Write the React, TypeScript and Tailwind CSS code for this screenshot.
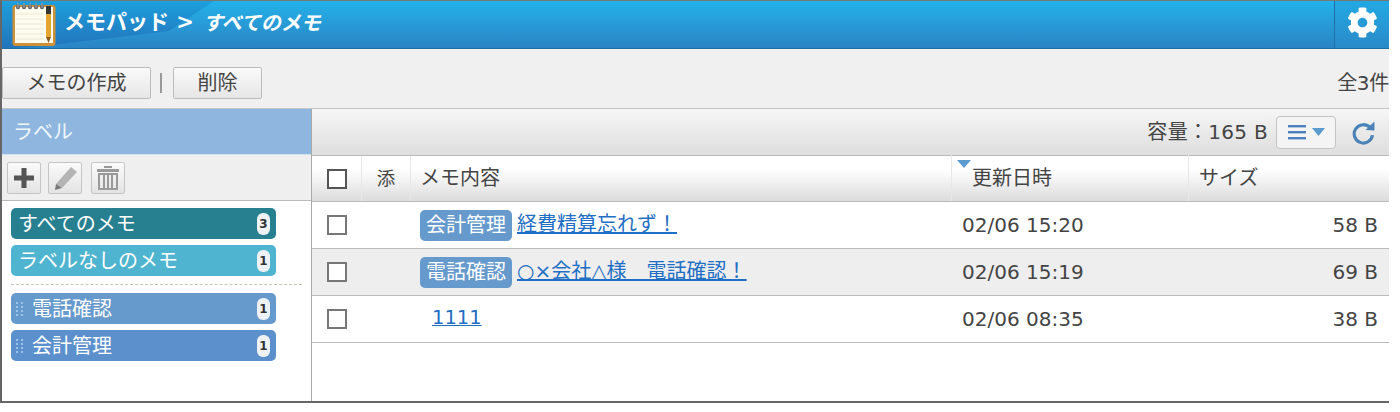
import React from "react";
import { FaCog } from "react-icons/fa";

const font = "font-['DejaVu_Sans','Noto_Sans_CJK_JP',sans-serif]";

function Notepad() {
  return (
    <svg width="44" height="43" viewBox="0 0 44 43">
      <rect x="0.5" y="2" width="43" height="41" rx="3" fill="#cf9138" />
      <rect x="3" y="4" width="38" height="36" fill="#fdfbee" />
      {[11, 16, 21, 26, 31, 36].map((y) => (
        <line key={y} x1="4" x2="32" y1={y} y2={y} stroke="#ece8d4" strokeWidth="1" />
      ))}
      {[6, 12, 18, 24, 30].map((x) => (
        <g key={x}>
          <circle cx={x} cy="4" r="2.2" fill="#666" />
          <rect x={x - 0.7} y="0" width="1.4" height="5" fill="#999" />
        </g>
      ))}
      <rect x="34" y="3" width="5" height="8" fill="#333" />
      <rect x="34" y="11" width="5" height="23" fill="#e3a52d" />
      <path d="M34 34 L39 34 L36.5 40 Z" fill="#8a5a20" />
    </svg>
  );
}

function Refresh() {
  return (
    <svg width="25" height="25" viewBox="0 0 24 24" fill="none">
      <path d="M18.5 7.5A8.8 8.8 0 1 0 20.6 14.5" stroke="#4a82b8" strokeWidth="3" />
      <path d="M14 9.5 L22.5 10 L22.5 1.5 Z" fill="#4a82b8" />
    </svg>
  );
}

function IconButton({ children, className = "" }: { children: React.ReactNode; className?: string }) {
  return (
    <div className={`w-[34px] h-[32px] flex items-center justify-center rounded-[2px] border border-[#c4c4c4] bg-gradient-to-b from-[#fafafa] to-[#e4e4e4] ${className}`}>
      {children}
    </div>
  );
}

function Count({ n }: { n: number }) {
  return (
    <span className="w-[13px] h-[22px] rounded-[6px] bg-[#eef2f5] text-[#333] text-[12px] font-bold flex items-center justify-center">
      {n}
    </span>
  );
}

function Grip() {
  return (
    <span className="w-[8px] h-[24px] mr-[8px] grid grid-cols-2 gap-x-[2px] gap-y-[2px] content-center">
      {[0, 1, 2, 3, 4, 5, 6, 7].map((i) => (
        <span key={i} className="w-[2px] h-[2px] bg-[#9cc3ea]" />
      ))}
    </span>
  );
}

function Label({ text, bg, n, grip }: { text: string; bg: string; n: number; grip?: boolean }) {
  return (
    <div className={`w-[265px] h-[31px] rounded-[5px] flex items-center pl-[5px] pr-[6px] text-white text-[20px] ${bg}`}>
      {grip ? <Grip /> : <span className="w-[2px]" />}
      <span className="flex-1 leading-none">{text}</span>
      <Count n={n} />
    </div>
  );
}

function Check({ big }: { big?: boolean }) {
  return <span className={`block w-[20px] h-[20px] border-2 ${big ? "border-[#555]" : "border-[#777]"} bg-white`} />;
}

function Tag({ text }: { text: string }) {
  return (
    <span className="w-[92px] h-[31px] shrink-0 rounded-[5px] bg-[#6699cc] text-white text-[20px] leading-none flex items-center justify-center">
      {text}
    </span>
  );
}

function Row({
  tag,
  title,
  date,
  size,
  alt,
}: {
  tag?: string;
  title: string;
  date: string;
  size: string;
  alt?: boolean;
}) {
  return (
    <div className={`h-[47px] grid grid-cols-[50px_49px_541px_237px_1fr] items-center text-[#444] text-[20px] leading-none border-b border-[#bbb] ${alt ? "bg-[#eeeeee]" : "bg-white"}`}>
      <div className="flex justify-center">
        <Check />
      </div>
      <div />
      <div className="flex items-center pl-[9px] gap-[5px]">
        {tag ? <Tag text={tag} /> : <span className="w-[7px]" />}
        <a className={`text-[#1f6fc4] underline leading-none -mt-[3px] ${tag ? "" : "text-[19.5px]"}`}>{title}</a>
      </div>
      <div className="pl-[10px]">{date}</div>
      <div className="text-right pr-[11px]">{size}</div>
    </div>
  );
}

export default function App() {
  return (
    <div className={`w-[1400px] h-[412px] bg-white overflow-hidden pr-[11px] ${font}`}>
      <div className="h-[403px] bg-[#f0f0f0] border-l-2 border-[#666] border-t border-t-[#777] border-b-2 border-b-[#666] flex flex-col">
        <header className="h-[48px] shrink-0 relative flex items-center bg-gradient-to-b from-[#22b2ea] to-[#2a84c4] border-b border-[#1d6fa8]">
          <div
            className="absolute inset-0 bg-gradient-to-b from-[#1d9fdc] to-[#2274bb]"
            style={{ clipPath: "polygon(0 0, 212px 0, 167px 30px, 50px 44px, 0 48px)" }}
          />
          <div className="relative ml-[10px]">
            <Notepad />
          </div>
          <div className="relative ml-[8px] flex items-center text-white font-bold -mt-[4px]">
            <span className="text-[21px]">メモパッド &gt;</span>
            <span className="ml-[9px] italic text-[20px]">すべてのメモ</span>
          </div>
          <div className="relative ml-auto w-[55px] h-[47px] flex items-center justify-center border-l border-[#1d6fa8] bg-gradient-to-b from-[#22a9e4] to-[#2a8ac8]">
            <FaCog className="text-white w-[31px] h-[31px] -mt-[4px]" />
          </div>
        </header>

        <div className="h-[59px] shrink-0 flex items-center justify-between pt-[8px] text-[#444] text-[20px]">
          <div className="flex items-center">
            <button className="w-[149px] h-[32px] rounded-[2px] border border-[#bbb] bg-gradient-to-b from-[#fafafa] to-[#e6e6e6] text-[#444] leading-none">
              メモの作成
            </button>
            <span className="ml-[9px] mr-[11px] w-[2px] h-[20px] bg-[#999]" />
            <button className="w-[89px] h-[32px] rounded-[2px] border border-[#bbb] bg-gradient-to-b from-[#fafafa] to-[#e6e6e6] text-[#444] leading-none">
              削除
            </button>
          </div>
          <span className="tracking-[-0.3px]">全3件</span>
        </div>

        <div className="flex-1 flex border-t border-[#c4c4c4] bg-white min-h-0">
          <aside className="w-[310px] shrink-0 border-r border-[#aaa] flex flex-col">
            <div className="h-[46px] bg-[#8eb6de] text-[#eef6fb] text-[20px] flex items-center pl-[11px] border-b border-[#cfe0ef]">
              ラベル
            </div>
            <div className="h-[46px] bg-[#efefef] border-b border-[#bbb] flex items-center gap-[7px] pl-[5px]">
              <IconButton>
                <svg width="22" height="22" viewBox="0 0 22 22">
                  <path d="M8.5 1h5v7.5H21v5h-7.5V21h-5v-7.5H1v-5h7.5z" fill="#555" />
                </svg>
              </IconButton>
              <IconButton>
                <svg width="28" height="28" viewBox="0 0 28 28">
                  <path d="M20 3 L26 8 L11 24 L5 20 Z" fill="#b4b4b4" />
                  <path d="M5 20 L11 24 L4 26 Z" fill="#777" />
                </svg>
              </IconButton>
              <IconButton className="ml-[2px]">
                <svg width="26" height="28" viewBox="0 0 26 28" fill="#9a9a9a">
                  <rect x="9" y="2" width="8" height="2" />
                  <rect x="2" y="5" width="22" height="3" />
                  <path d="M4 10h18v15H4z" fill="none" stroke="#9a9a9a" strokeWidth="2" />
                  <rect x="8" y="11" width="2" height="13" />
                  <rect x="12" y="11" width="2" height="13" />
                  <rect x="16" y="11" width="2" height="13" />
                </svg>
              </IconButton>
            </div>
            <div className="pl-[9px] pr-[9px] pt-[7px] flex flex-col gap-[6px]">
              <Label text="すべてのメモ" bg="bg-[#27808f]" n={3} />
              <Label text="ラベルなしのメモ" bg="bg-[#4fb4cf]" n={1} />
              <div className="border-t border-dashed border-[#c8c4b8] mt-[2px] mb-[2px]" />
              <Label text="電話確認" bg="bg-[#6699cc]" n={1} grip />
              <Label text="会計管理" bg="bg-[#5b90cd]" n={1} grip />
            </div>
          </aside>

          <main className="flex-1 flex flex-col min-w-0">
            <div className="h-[46px] shrink-0 bg-gradient-to-b from-[#f6f6f6] to-[#dedede] flex items-center justify-end text-[#444] text-[20px]">
              <span className="tracking-[0.3px]">容量：165 B</span>
              <div className="ml-[8px] w-[60px] h-[33px] rounded-[4px] border border-[#c4c4c4] bg-[#f4f4f4] flex items-center justify-center gap-[6px]">
                <svg width="18" height="16" viewBox="0 0 18 16" fill="#4a82c0">
                  <rect y="1" width="18" height="2.4" />
                  <rect y="7" width="18" height="2.4" />
                  <rect y="13" width="18" height="2.4" />
                </svg>
                <svg width="13" height="8" viewBox="0 0 13 8">
                  <path d="M0 0h13L6.5 8z" fill="#5b9bd0" />
                </svg>
              </div>
              <div className="ml-[15px] mr-[13px] flex">
                <Refresh />
              </div>
            </div>
            <div className="h-[47px] shrink-0 grid grid-cols-[50px_49px_541px_237px_1fr] items-stretch text-[#444] text-[20px] border-t border-[#bbb] border-b border-b-[#bbb] bg-gradient-to-b from-white from-30% to-[#dcdcdc]">
              <div className="flex items-center justify-center border-r border-[#e8e8e8]">
                <Check big />
              </div>
              <div className="flex items-center justify-center border-r border-[#e8e8e8] text-[18.5px]">添</div>
              <div className="flex items-center pl-[9px] border-r border-[#e8e8e8] -mt-[1px]">メモ内容</div>
              <div className="relative flex items-center pl-[20px] border-r border-[#e8e8e8] -mt-[1px]">
                <svg className="absolute left-[5px] top-[5px]" width="14" height="8" viewBox="0 0 14 8">
                  <path d="M0 0h14L7 8z" fill="#5b9bd0" />
                </svg>
                更新日時
              </div>
              <div className="flex items-center pl-[10px] -mt-[1px]">サイズ</div>
            </div>
            <Row tag="会計管理" title="経費精算忘れず！" date="02/06 15:20" size="58 B" />
            <Row tag="電話確認" title="○×会社△様　電話確認！" date="02/06 15:19" size="69 B" alt />
            <Row title="1111" date="02/06 08:35" size="38 B" />
          </main>
        </div>
      </div>
    </div>
  );
}
